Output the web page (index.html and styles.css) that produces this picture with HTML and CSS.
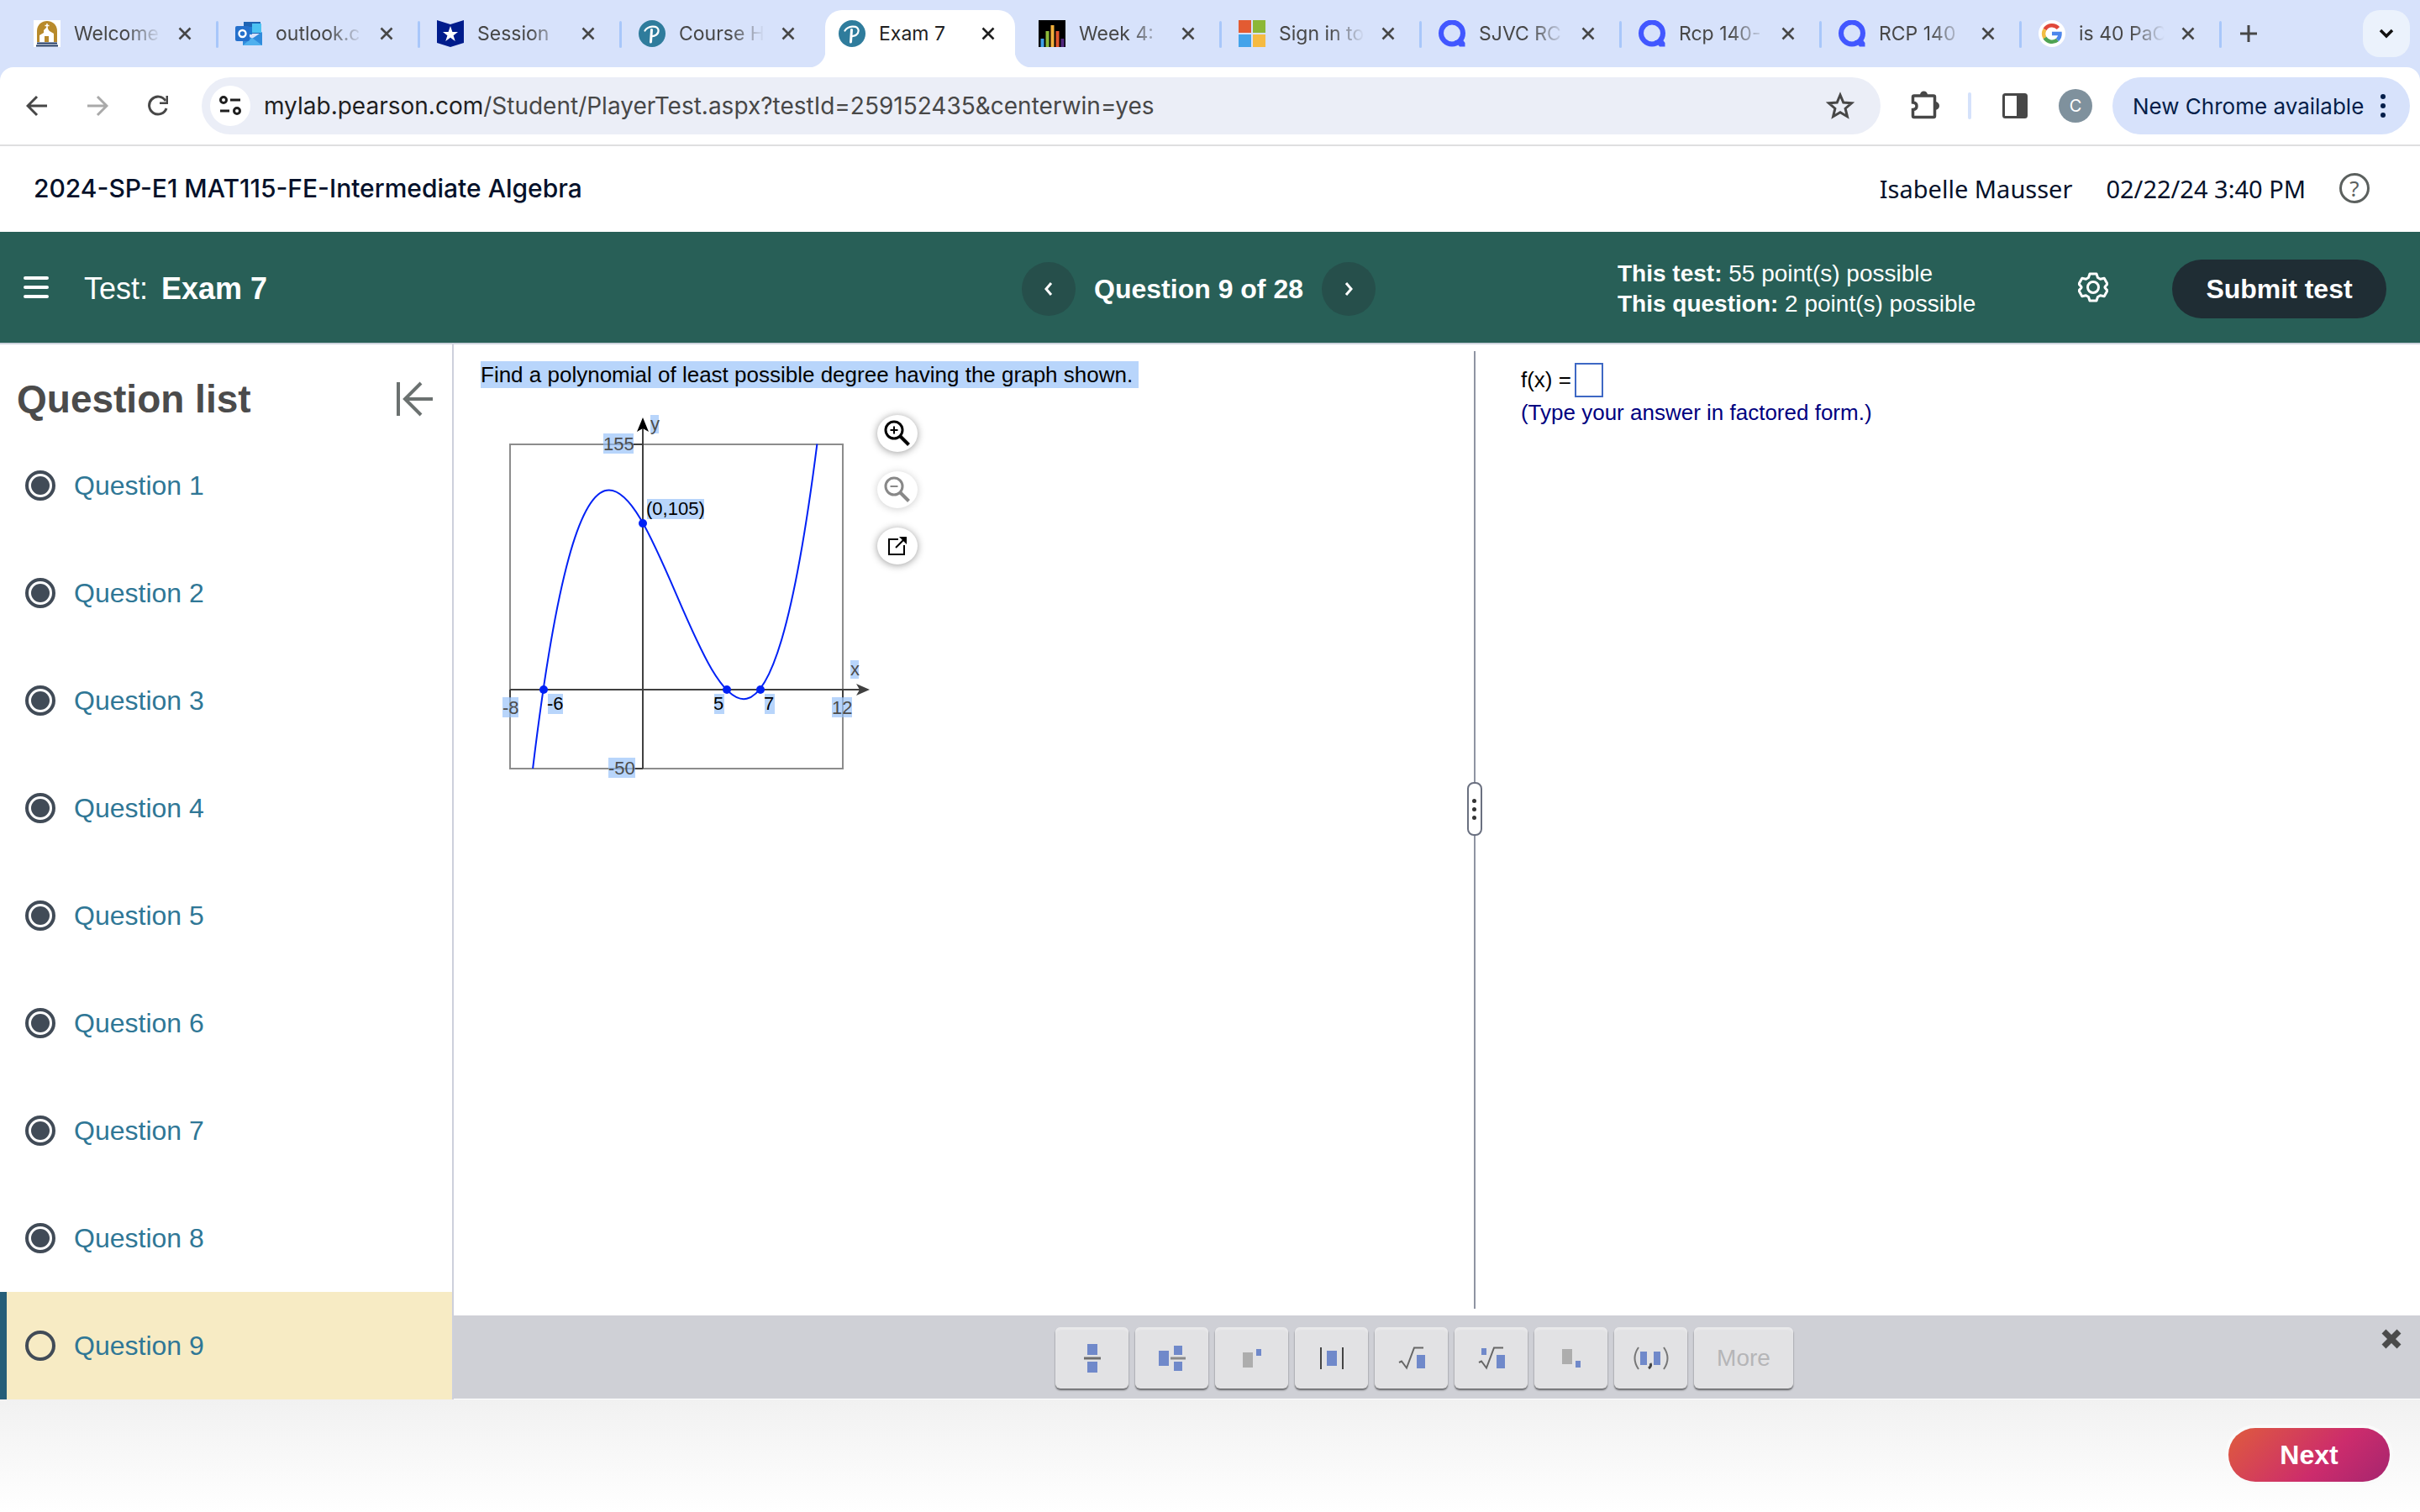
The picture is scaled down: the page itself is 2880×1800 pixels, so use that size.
FILE: index.html
```html
<!DOCTYPE html>
<html lang="en">

<head>
    <meta charset="utf-8">
    <meta name="viewport" content="width=device-width, initial-scale=1.0">
    <title>Exam 7</title>

    <link rel="stylesheet" href="styles.css">
</head>

<body>

<!-- shared icons -->
<svg class="defs" aria-hidden="true">
    <symbol id="x" viewBox="0 0 16 16"><path d="M1.5 1.5l13 13M14.5 1.5l-13 13" fill="none" stroke="currentColor" stroke-width="2.6"/></symbol>
    <symbol id="pearson" viewBox="0 0 32 32">
        <circle cx="16" cy="16" r="16" fill="#2f7c9c"/>
        <path d="M7.500 12.500C11 7 22 5.500 23.500 11.500C24.500 17 18.500 19.500 15.500 19" fill="none" stroke="#fff" stroke-width="2.200" stroke-linecap="round"/>
        <path d="M15.500 11.500L14.500 26" fill="none" stroke="#fff" stroke-width="3" stroke-linecap="round"/>
    </symbol>
    <symbol id="quizlet" viewBox="0 0 32 32">
        <circle cx="16" cy="15.500" r="13" fill="none" stroke="#4257ff" stroke-width="6"/>
        <path d="M19 24h6l2-3 4.500 6v4.500h-6.500z" fill="#4257ff"/>
    </symbol>
    <symbol id="radio-done" viewBox="0 0 36 36">
        <circle cx="18" cy="18" r="16" fill="none" stroke="#414b57" stroke-width="4"/>
        <circle cx="18" cy="18" r="11" fill="#414b57"/>
    </symbol>
    <symbol id="root" viewBox="0 0 32 28"><path d="M1 19l3-1.500 6 8L19 1.500h11" fill="none" stroke="#666" stroke-width="2"/></symbol>
</svg>

<div class="tabs">
    <div class="tab tab-wide">
        <svg class="favicon" viewBox="0 0 32 32"><rect width="32" height="32" fill="#fff"/><path d="M4 26V13C4 5 10 1 16 1s12 4 12 12v13z" fill="#b88a2b"/><path d="M16 4v7M13.500 6.500h5" stroke="#fff" stroke-width="1.500"/><path d="M16 8l-4 4v3l-5 3v8h6v-7h5v7h6V16l-5-3-1-1z" fill="#fff"/><path d="M4 27.500h24M3 30.500h26" stroke="#1f3864" stroke-width="1.800"/></svg>
        <span class="tab-name fade">Welcome</span>
        <button class="tab-close" aria-label="Close tab"><svg><use href="#x"/></svg></button>
    </div>
    <div class="tab tab-wide">
        <svg class="favicon" viewBox="0 0 32 32"><path d="M10 2h20v14H10z" fill="#1e64b4"/><path d="M20 4h11v11H20z" fill="#4cc2f2"/><path d="M10 8h10v9H10z" fill="#1c7bd4"/><path d="M9 14l11 8 12-8v16H9z" fill="#2f8bdc"/><path d="M9 30l11-9 12 9z" fill="#4fb0ee"/><rect y="7" width="17" height="18" rx="2" fill="#2470cc"/><circle cx="8.500" cy="16" r="4" fill="none" stroke="#fff" stroke-width="2.400"/></svg>
        <span class="tab-name fade">outlook.c</span>
        <button class="tab-close" aria-label="Close tab"><svg><use href="#x"/></svg></button>
    </div>
    <div class="tab tab-wide">
        <svg class="favicon" viewBox="0 0 32 32"><path d="M0 0l16 5L32 0v27l-16 5-16-5z" fill="#001c8c"/><path d="M16 7l2.400 7H25l-5.400 4.200L21.700 25 16 20.800 10.300 25l2.100-6.800L7 14h6.600z" fill="#fff"/></svg>
        <span class="tab-name fade">Session</span>
        <button class="tab-close" aria-label="Close tab"><svg><use href="#x"/></svg></button>
    </div>
    <div class="tab no-line">
        <svg class="favicon"><use href="#pearson"/></svg>
        <span class="tab-name fade">Course H</span>
        <button class="tab-close" aria-label="Close tab"><svg><use href="#x"/></svg></button>
    </div>
    <div class="tab active no-line">
        <svg class="favicon"><use href="#pearson"/></svg>
        <span class="tab-name">Exam 7</span>
        <button class="tab-close" aria-label="Close tab"><svg><use href="#x"/></svg></button>
    </div>
    <div class="tab">
        <svg class="favicon" viewBox="0 0 32 32"><rect width="32" height="32" fill="#000"/><path d="M4.500 22v10" stroke="#3fa0e8" stroke-width="4"/><path d="M10.500 13v19" stroke="#8cba3a" stroke-width="4"/><path d="M16.500 6v26" stroke="#f2b13c" stroke-width="4"/><path d="M22.500 13v19" stroke="#e2562d" stroke-width="4"/><path d="M28.500 22v10" stroke="#52287d" stroke-width="4"/></svg>
        <span class="tab-name fade">Week 4:</span>
        <button class="tab-close" aria-label="Close tab"><svg><use href="#x"/></svg></button>
    </div>
    <div class="tab">
        <svg class="favicon" viewBox="0 0 32 32"><path d="M0 0h15v15H0z" fill="#e35b32"/><path d="M17 0h15v15H17z" fill="#8cb736"/><path d="M0 17h15v15H0z" fill="#43a3ea"/><path d="M17 17h15v15H17z" fill="#f5ba41"/></svg>
        <span class="tab-name fade">Sign in to</span>
        <button class="tab-close" aria-label="Close tab"><svg><use href="#x"/></svg></button>
    </div>
    <div class="tab">
        <svg class="favicon"><use href="#quizlet"/></svg>
        <span class="tab-name fade">SJVC RC</span>
        <button class="tab-close" aria-label="Close tab"><svg><use href="#x"/></svg></button>
    </div>
    <div class="tab">
        <svg class="favicon"><use href="#quizlet"/></svg>
        <span class="tab-name fade">Rcp 140-</span>
        <button class="tab-close" aria-label="Close tab"><svg><use href="#x"/></svg></button>
    </div>
    <div class="tab">
        <svg class="favicon"><use href="#quizlet"/></svg>
        <span class="tab-name fade">RCP 140</span>
        <button class="tab-close" aria-label="Close tab"><svg><use href="#x"/></svg></button>
    </div>
    <div class="tab">
        <svg class="favicon" viewBox="0 0 32 32"><circle cx="16" cy="16" r="16" fill="#fff"/><g fill="none" stroke-width="4.500"><path d="M23.500 9.500A10 10 0 0 0 7.500 11" stroke="#e0483a"/><path d="M7.500 11a10 10 0 0 0 0 10" stroke="#f2bd42"/><path d="M7.500 21a10 10 0 0 0 15 2.500" stroke="#4fa353"/><path d="M22.500 23.500A9.500 9.500 0 0 0 25.500 16H16" stroke="#4d86ec"/></g></svg>
        <span class="tab-name fade">is 40 PaC</span>
        <button class="tab-close" aria-label="Close tab"><svg><use href="#x"/></svg></button>
    </div>
    <button class="new-tab" aria-label="New tab"><svg width="20" height="20" viewBox="0 0 20 20"><path d="M10 0v20M0 10h20" stroke="currentColor" stroke-width="3"/></svg></button>
    <button class="tab-search" aria-label="Search tabs"><svg width="18" height="12" viewBox="0 0 18 12"><path d="M2 2l7 7 7-7" fill="none" stroke="#111" stroke-width="3.500"/></svg></button>
</div>

<div class="toolbar">
    <button class="tool" aria-label="Back"><svg width="26" height="26" viewBox="0 0 26 26"><path d="M25 13H3M13 2L2 13l11 11" fill="none" stroke="currentColor" stroke-width="3"/></svg></button>
    <button class="tool off" aria-label="Forward"><svg width="26" height="26" viewBox="0 0 26 26"><path d="M1 13h22M13 2l11 11-11 11" fill="none" stroke="currentColor" stroke-width="3"/></svg></button>
    <button class="tool" aria-label="Reload"><svg width="26" height="26" viewBox="0 0 26 26"><path d="M23 16A10.500 10.500 0 1 1 22 7" fill="none" stroke="currentColor" stroke-width="3"/><path d="M25 1v10H15V8.500h7.500V1z" fill="currentColor"/></svg></button>

    <div class="address">
        <span class="site-info"><svg width="26" height="24" viewBox="0 0 26 24"><g fill="none" stroke="#1f1f1f" stroke-width="3"><circle cx="5" cy="5" r="3.500"/><path d="M13 5h12M1 18h11"/><circle cx="21" cy="18" r="3.500"/></g></svg></span>
        <span class="url">mylab.pearson.com<span class="path">/Student/PlayerTest.aspx?testId=259152435&amp;centerwin=yes</span></span>
        <svg width="34" height="34" viewBox="0 0 34 34"><path d="M17 4l3.800 9 9.700.800-7.400 6.400 2.300 9.500-8.400-5-8.400 5 2.300-9.500-7.400-6.400 9.700-.800z" fill="none" stroke="#474747" stroke-width="3"/></svg>
    </div>

    <div class="tools-right">
        <svg class="puzzle" width="34" height="36" viewBox="0 0 34 36"><path d="M4 6h23q1.500 0 1.500 1.500V30q0 1.500-1.500 1.500H4q-1.500 0-1.500-1.500v-7.500C8.500 22 8.500 14.500 2.500 14V7.500Q2.500 6 4 6z" fill="none" stroke="#474747" stroke-width="3.500"/><path d="M11 5a4.500 4.500 0 0 1 9 0zM29 13a4.500 4.500 0 0 1 0 10z" fill="#474747"/></svg>
        <span class="bar-line"></span>
        <svg class="side-panel" width="30" height="30" viewBox="0 0 30 30"><rect x="1.500" y="1.500" width="27" height="27" rx="2" fill="none" stroke="#474747" stroke-width="3"/><path d="M17 1h12v28H17z" fill="#474747"/></svg>
        <span class="avatar">C</span>
        <button class="update">New Chrome available <svg width="6" height="28" viewBox="0 0 6 28"><g fill="#041e49"><circle cx="3" cy="3" r="3"/><circle cx="3" cy="14" r="3"/><circle cx="3" cy="25" r="3"/></g></svg></button>
    </div>
</div>

<header class="course">
    <h1>2024-SP-E1 MAT115-FE-Intermediate Algebra</h1>
    <div class="course-info">
        <span>Isabelle Mausser</span>
        <span>02/22/24 3:40 PM</span>
        <button class="help" aria-label="Help">?</button>
    </div>
</header>

<div class="test-bar">
    <button class="menu" aria-label="Menu"><svg width="30" height="28" viewBox="0 0 30 28"><path d="M2 3h26M2 14h26M2 25h26" stroke="#fff" stroke-width="4" stroke-linecap="round"/></svg></button>
    <div class="test-name">Test: <b>Exam 7</b></div>
    <nav class="pager">
        <button aria-label="Previous question"><svg width="12" height="18" viewBox="0 0 12 18"><path d="M9 2L3 9l6 7" fill="none" stroke="#fff" stroke-width="3"/></svg></button>
        <b>Question 9 of 28</b>
        <button aria-label="Next question"><svg width="12" height="18" viewBox="0 0 12 18"><path d="M3 2l6 7-6 7" fill="none" stroke="#fff" stroke-width="3"/></svg></button>
    </nav>
    <div class="points">
        <p><b>This test:</b> 55 point(s) possible</p>
        <p><b>This question:</b> 2 point(s) possible</p>
    </div>
    <button class="gear" aria-label="Settings"><svg width="36" height="36" viewBox="0 0 36 36"><g fill="none" stroke="#fff" stroke-width="3" stroke-linejoin="round"><path d="M14 2h8l1.500 4.500 3 1.700 4.700-1 3.800 6.800-3 3.500v1l3 3.500-3.800 6.800-4.700-1-3 1.700L22 34h-8l-1.500-4.500-3-1.700-4.700 1L1 22l3-3.500v-1L1 14l3.800-6.800 4.700 1 3-1.700z"/><circle cx="18" cy="18" r="6.500"/></g></svg></button>
    <button class="submit">Submit test</button>
</div>

<div class="content">
    <aside class="sidebar">
        <div class="sidebar-head">
            <h2>Question list</h2>
            <button aria-label="Hide question list"><svg width="44" height="42" viewBox="0 0 44 42"><path d="M2 1v40M43 21H10M29 2L10 21l19 19" fill="none" stroke="#6b7170" stroke-width="4"/></svg></button>
        </div>
        <ul>
            <li><a href="#"><svg><use href="#radio-done"/></svg>Question 1</a></li>
            <li><a href="#"><svg><use href="#radio-done"/></svg>Question 2</a></li>
            <li><a href="#"><svg><use href="#radio-done"/></svg>Question 3</a></li>
            <li><a href="#"><svg><use href="#radio-done"/></svg>Question 4</a></li>
            <li><a href="#"><svg><use href="#radio-done"/></svg>Question 5</a></li>
            <li><a href="#"><svg><use href="#radio-done"/></svg>Question 6</a></li>
            <li><a href="#"><svg><use href="#radio-done"/></svg>Question 7</a></li>
            <li><a href="#"><svg><use href="#radio-done"/></svg>Question 8</a></li>
            <li class="current"><a href="#"><svg viewBox="0 0 36 36"><circle cx="18" cy="18" r="16" fill="none" stroke="#414b57" stroke-width="4"/></svg>Question 9</a></li>
        </ul>
    </aside>

    <main>
        <div class="work">
            <section class="question">
                <p><mark>Find a polynomial of least possible degree having the graph shown.&nbsp;</mark></p>
                <div class="figure">
                    <svg class="graph" width="452" height="444" viewBox="0 0 452 444">
                        <rect x="15" y="39" width="396" height="386" fill="none" stroke="#8c8c8c" stroke-width="2"/>
                        <g stroke="#404040" stroke-width="2">
                            <path d="M173 425V20M15 331h416M162 39h11M162 425h11M15 331v10M411 331v10"/>
                        </g>
                        <path d="M173 7l7 17-7-4-7 4z" fill="#000"/>
                        <path d="M443 331l-16-7 4 7-4 7z" fill="#404040"/>
                        <!-- y = 0.5(x + 6)(x - 5)(x - 7) -->
                        <path d="M42.100 424.900C154.900-510.800 267.600 926.300 380.400 38.700" fill="none" stroke="#0021f5" stroke-width="2"/>
                        <g fill="#0021f5">
                            <circle cx="55" cy="331" r="5"/>
                            <circle cx="273" cy="331" r="5"/>
                            <circle cx="313" cy="331" r="5"/>
                            <circle cx="173" cy="133" r="5"/>
                        </g>
                        <g class="hl">
                            <rect x="182" y="4" width="10" height="22"/>
                            <rect x="126" y="26" width="36" height="24"/>
                            <rect x="178" y="104" width="68" height="24"/>
                            <rect x="60" y="336" width="18" height="24"/>
                            <rect x="258" y="336" width="12" height="24"/>
                            <rect x="318" y="336" width="12" height="24"/>
                            <rect x="6" y="340" width="19" height="24"/>
                            <rect x="398" y="340" width="24" height="24"/>
                            <rect x="420" y="296" width="10" height="22"/>
                            <rect x="132" y="412" width="32" height="24"/>
                        </g>
                        <g class="axis">
                            <text x="182" y="22">y</text>
                            <text x="126" y="46">155</text>
                            <text x="6" y="360">-8</text>
                            <text x="398" y="360">12</text>
                            <text x="420" y="314">x</text>
                            <text x="132" y="432">-50</text>
                        </g>
                        <g class="mark">
                            <text x="177" y="123">(0,105)</text>
                            <text x="59" y="355">-6</text>
                            <text x="257" y="355">5</text>
                            <text x="317" y="355">7</text>
                        </g>
                    </svg>
                    <div class="zoom">
                        <button aria-label="Zoom in"><svg width="32" height="32" viewBox="0 0 32 32"><circle cx="12" cy="12" r="10" fill="none" stroke="#000" stroke-width="3"/><path d="M12 7.500v9M7.500 12h9" stroke="#000" stroke-width="2"/><path d="M19.500 19.500l10 10" stroke="#000" stroke-width="4"/></svg></button>
                        <button class="disabled" aria-label="Zoom out" disabled><svg width="32" height="32" viewBox="0 0 32 32"><circle cx="12" cy="12" r="10" fill="none" stroke="#888" stroke-width="3"/><path d="M7.500 12h9" stroke="#888" stroke-width="2"/><path d="M19.500 19.500l10 10" stroke="#888" stroke-width="4"/></svg></button>
                        <button aria-label="Open graph"><svg width="24" height="24" viewBox="0 0 24 24"><path d="M13 4H2v18h18V11" fill="none" stroke="#000" stroke-width="2"/><path d="M10 14L20 4" stroke="#000" stroke-width="2"/><path d="M14 1h9v9z" fill="#000"/></svg></button>
                    </div>
                </div>
            </section>
            <div class="divider"><span class="handle"><i></i><i></i><i></i></span></div>
            <section class="answer">
                <div class="answer-line"><label for="fx">f(x) =</label><input id="fx" type="text"></div>
                <p class="hint">(Type your answer in factored form.)</p>
            </section>
        </div>

        <div class="palette">
            <div class="keys">
                <button aria-label="Fraction"><svg width="20" height="34" viewBox="0 0 20 34"><path d="M4 0h12v13H4zM4 21h12v13H4z" fill="#7089ca"/><path d="M0 17h20" stroke="#6e6e6e" stroke-width="3"/></svg></button>
                <button aria-label="Mixed number"><svg width="32" height="30" viewBox="0 0 32 30"><path d="M0 6h12v18H0zM18 0h10v11H18zM18 19h10v11H18z" fill="#7089ca"/><path d="M14 15h18" stroke="#8a8a8a" stroke-width="3"/></svg></button>
                <button aria-label="Exponent"><svg width="22" height="22" viewBox="0 0 22 22"><path d="M0 4h12v18H0z" fill="#adadad"/><path d="M16 0h6v8h-6z" fill="#7089ca"/></svg></button>
                <button aria-label="Absolute value"><svg width="28" height="26" viewBox="0 0 28 26"><path d="M8 4h12v18H8z" fill="#7089ca"/><path d="M1 0v26M27 0v26" stroke="#444" stroke-width="2"/></svg></button>
                <button aria-label="Square root"><svg width="32" height="28" viewBox="0 0 32 28"><use href="#root"/><path d="M22 10h10v16H22z" fill="#7089ca"/></svg></button>
                <button aria-label="Nth root"><svg width="32" height="28" viewBox="0 0 32 28"><use href="#root"/><path d="M22 10h10v16H22zM4 2h6v8H4z" fill="#7089ca"/></svg></button>
                <button aria-label="Subscript"><svg width="22" height="22" viewBox="0 0 22 22"><path d="M0 0h12v18H0z" fill="#adadad"/><path d="M16 14h6v8h-6z" fill="#7089ca"/></svg></button>
                <button aria-label="Ordered pair"><svg width="42" height="28" viewBox="0 0 42 28"><path d="M8 6h8v16H8zM24 6h8v16h-8z" fill="#7089ca"/><path d="M6 1Q-3 14 6 27M36 1q9 13 0 26" fill="none" stroke="#777" stroke-width="2"/><path d="M20 20q2 3-2 6" fill="none" stroke="#444" stroke-width="3"/></svg></button>
                <button class="more" disabled>More</button>
            </div>
            <button class="palette-close" aria-label="Close palette"><svg width="24" height="24" viewBox="0 0 24 24"><path d="M3 3l18 18M21 3L3 21" stroke="#4b4b4b" stroke-width="7"/></svg></button>
        </div>
    </main>
</div>

<footer>
    <button class="next">Next</button>
</footer>

</body>

</html>
```

FILE: styles.css
```css
* {
    box-sizing: border-box;
}

body {
    margin: 0;
    min-height: 100vh;
    display: flex;
    flex-direction: column;
    background: #fff;
    font-family: "Liberation Sans", Arial, sans-serif;
    font-size: 26px;
    color: #000;
}

h1, h2, p, ul {
    margin: 0;
    padding: 0;
}

button {
    border: none;
    padding: 0;
    background: none;
    font-family: inherit;
    color: inherit;
    display: flex;
    align-items: center;
    justify-content: center;
}

svg {
    display: block;
    flex: none;
}

.defs {
    position: absolute;
    width: 0;
    height: 0;
}

/* browser tabs */
.tabs {
    display: flex;
    align-items: center;
    height: 96px;
    margin-bottom: -16px;
    padding: 0 12px 16px 20px;
    background: #d7e2fb;
    font-family: Inter, Roboto, sans-serif;
    font-size: 23px;
    color: #474747;
}

.tab {
    position: relative;
    display: flex;
    align-items: center;
    width: 238px;
    height: 68px;
    margin-top: 12px;
    padding: 0 32px 12px 20px;
}

.tab-wide {
    width: 240px;
}

.tab::after {
    content: "";
    position: absolute;
    right: 0;
    top: 13px;
    width: 3px;
    height: 32px;
    border-radius: 2px;
    background: #a8c7fa;
}

.no-line::after {
    display: none;
}

.active {
    color: #1f1f1f;
}

/* the active tab's white body, with flared feet */
.active::before {
    content: "";
    position: absolute;
    z-index: 0;
    left: 4px;
    right: 8px;
    top: 0;
    bottom: 0;
    border-radius: 20px 20px 0 0;
    background: #fff;
}

.active::after {
    display: block;
    left: -16px;
    right: -12px;
    top: auto;
    bottom: 0;
    width: auto;
    height: 20px;
    border-radius: 0;
    background:
        radial-gradient(circle at 0 0, transparent 20px, #fff 21px) left / 20px 20px no-repeat,
        radial-gradient(circle at 20px 0, transparent 20px, #fff 21px) right / 20px 20px no-repeat;
}

.favicon {
    position: relative;
    z-index: 1;
    width: 32px;
    height: 32px;
}

.tab-name {
    position: relative;
    z-index: 1;
    flex: 1;
    min-width: 0;
    margin: 0 20px 0 16px;
    white-space: nowrap;
}

.fade {
    -webkit-mask-image: linear-gradient(to right, #000 60%, transparent);
    mask-image: linear-gradient(to right, #000 60%, transparent);
}

.tab-close {
    position: relative;
    z-index: 1;
}

.tab-close svg {
    width: 16px;
    height: 16px;
}

.new-tab {
    margin-left: 22px;
}

.tab-search {
    width: 56px;
    height: 56px;
    margin-left: auto;
    border-radius: 20px;
    background: #ebf2fc;
}

/* toolbar */
.toolbar {
    position: relative;
    display: flex;
    align-items: center;
    height: 94px;
    padding: 0 12px 0 31px;
    border-bottom: 2px solid #dfdfe0;
    border-radius: 16px 16px 0 0;
    background: #fff;
    font-family: Inter, Roboto, sans-serif;
    color: #474747;
}

.tool {
    margin-right: 46px;
}

.off {
    color: #a9a9a9;
}

.address {
    flex: 1;
    display: flex;
    align-items: center;
    height: 68px;
    margin-left: -7px;
    padding: 0 31px 0 10px;
    border-radius: 34px;
    background: #ebeef7;
}

.site-info {
    display: flex;
    align-items: center;
    justify-content: center;
    width: 48px;
    height: 48px;
    margin-right: 16px;
    border-radius: 50%;
    background: #fff;
}

.url {
    flex: 1;
    font-size: 28px;
    color: #1f1f1f;
}

.path {
    color: #474747;
}

.tools-right {
    display: flex;
    align-items: center;
    margin-left: 36px;
}

.bar-line {
    width: 4px;
    height: 32px;
    margin: 0 37px 0 34px;
    border-radius: 2px;
    background: #d5e2fb;
}

.avatar {
    width: 40px;
    height: 40px;
    margin: 0 24px 0 37px;
    border-radius: 50%;
    background: #7f919d;
    color: #fff;
    font-size: 20px;
    line-height: 40px;
    text-align: center;
}

.update {
    justify-content: space-between;
    width: 354px;
    height: 68px;
    padding: 0 29px 0 24px;
    border-radius: 34px;
    background: #d7e2fb;
    color: #041e49;
    font-size: 26px;
    white-space: nowrap;
}

/* course header */
.course {
    display: flex;
    align-items: center;
    justify-content: space-between;
    height: 102px;
    padding: 0 60px 2px 40px;
    color: #05112a;
}

.course h1 {
    font-family: Inter, Roboto, sans-serif;
    font-size: 30px;
    font-weight: 500;
}

.course-info {
    display: flex;
    align-items: center;
    gap: 40px;
    font-family: "Noto Sans", sans-serif;
    font-size: 29px;
}

.help {
    width: 36px;
    height: 36px;
    border: 3px solid #5b605e;
    border-radius: 50%;
    color: #5b605e;
    font-size: 26px;
}

/* green bar */
.test-bar {
    display: flex;
    align-items: center;
    height: 134px;
    padding: 4px 40px 0 28px;
    border-bottom: 2px solid #ccd3dc;
    background: #285f57;
    color: #fff;
}

.menu, .gear {
    margin-bottom: 4px;
}

.test-name {
    flex: 1;
    margin-left: 42px;
    font-size: 36px;
}

.test-name b {
    margin-left: 6px;
}

.pager {
    display: flex;
    align-items: center;
    gap: 22px;
    margin-right: 288px;
    font-size: 32px;
}

.pager button {
    width: 64px;
    height: 64px;
    border-radius: 50%;
    background: #264f4b;
}

.points {
    width: 548px;
    font-size: 28px;
    line-height: 36px;
}

.submit {
    width: 255px;
    height: 70px;
    margin-left: 76px;
    border-radius: 35px;
    background: #1f2d34;
    font-size: 32px;
    font-weight: bold;
}

/* sidebar */
.content {
    flex: 1;
    display: flex;
}

.sidebar {
    width: 540px;
    border-right: 2px solid #cdd0dc;
}

.sidebar-head {
    display: flex;
    align-items: center;
    justify-content: space-between;
    height: 104px;
    padding: 26px 22px 0 20px;
}

.sidebar-head h2 {
    font-size: 46px;
    color: #4b4b4b;
}

.sidebar ul {
    list-style: none;
}

.sidebar a {
    display: flex;
    align-items: center;
    gap: 22px;
    height: 128px;
    padding-left: 30px;
    color: #2f7796;
    font-size: 32px;
    text-decoration: none;
}

.sidebar li svg {
    width: 36px;
    height: 36px;
}

.current a {
    padding-left: 22px;
    border-left: 8px solid #265e78;
    background: #f7ebc4;
}

/* question and answer */
main {
    flex: 1;
    display: flex;
    flex-direction: column;
}

.work {
    flex: 1;
    display: grid;
    grid-template-columns: 54fr 2px 50fr;
    padding: 8px 0;
}

.question {
    padding: 12px 0 0 32px;
}

mark {
    display: inline-block;
    height: 32px;
    line-height: 32px;
    background: #b8d5fb;
}

.figure {
    display: flex;
    align-items: flex-start;
    margin: 28px 0 0 20px;
}

.hl {
    fill: #8ebcf8;
    fill-opacity: .63;
}

.graph text {
    font-size: 22px;
}

.axis {
    fill: #4d4d4d;
}

.zoom {
    display: grid;
    gap: 23px;
    margin-top: 4px;
}

.zoom button {
    width: 48px;
    height: 44px;
    border-radius: 50%;
    background: #fff;
    box-shadow: 0 1px 10px rgba(0, 0, 0, .4);
}

.zoom .disabled {
    box-shadow: 0 1px 10px rgba(0, 0, 0, .2);
}

.divider {
    position: relative;
    background: #8f94a2;
}

.handle {
    position: absolute;
    left: -8px;
    top: 45%;
    display: flex;
    flex-direction: column;
    align-items: center;
    justify-content: center;
    gap: 5px;
    width: 18px;
    height: 64px;
    border: 2px solid #6a7080;
    border-radius: 8px;
    background: #fff;
}

.handle i {
    width: 5px;
    height: 5px;
    border-radius: 50%;
    background: #333;
}

.answer {
    padding: 14px 0 0 54px;
}

.answer-line {
    display: flex;
    align-items: center;
    gap: 4px;
}

.answer input {
    width: 34px;
    height: 41px;
    padding: 0;
    border: 2px solid #3e68c4;
    background: #fff;
}

.hint {
    margin-top: 2px;
    line-height: 32px;
    color: #000080;
}

/* math palette */
.palette {
    position: relative;
    height: 100px;
    padding: 14px 30px 0 0;
    border-bottom: 1px solid #fff;
    background: #cfd0d6;
}

.keys {
    display: flex;
    justify-content: center;
    gap: 8px;
}

.keys button {
    width: 87px;
    height: 73px;
    border-radius: 6px;
    background: #e2e2e4;
    box-shadow: 0 2px 2px rgba(0, 0, 0, .5), inset 0 3px 2px #e9e9eb;
}

.keys .more {
    width: 118px;
    color: #b5b5b7;
    font-size: 28px;
}

.palette-close {
    position: absolute;
    right: 22px;
    top: 16px;
}

/* footer */
footer {
    display: flex;
    justify-content: flex-end;
    height: 134px;
    padding: 34px 36px 0;
    background: linear-gradient(#f1f1f1, #fff);
}

.next {
    width: 192px;
    height: 64px;
    border-radius: 32px;
    background: linear-gradient(135deg, #df5c3d, #cc2c6c 60%, #a5256f);
    box-shadow: 0 0 0 4px #fafafa;
    color: #fff;
    font-size: 32px;
    font-weight: bold;
}
```
